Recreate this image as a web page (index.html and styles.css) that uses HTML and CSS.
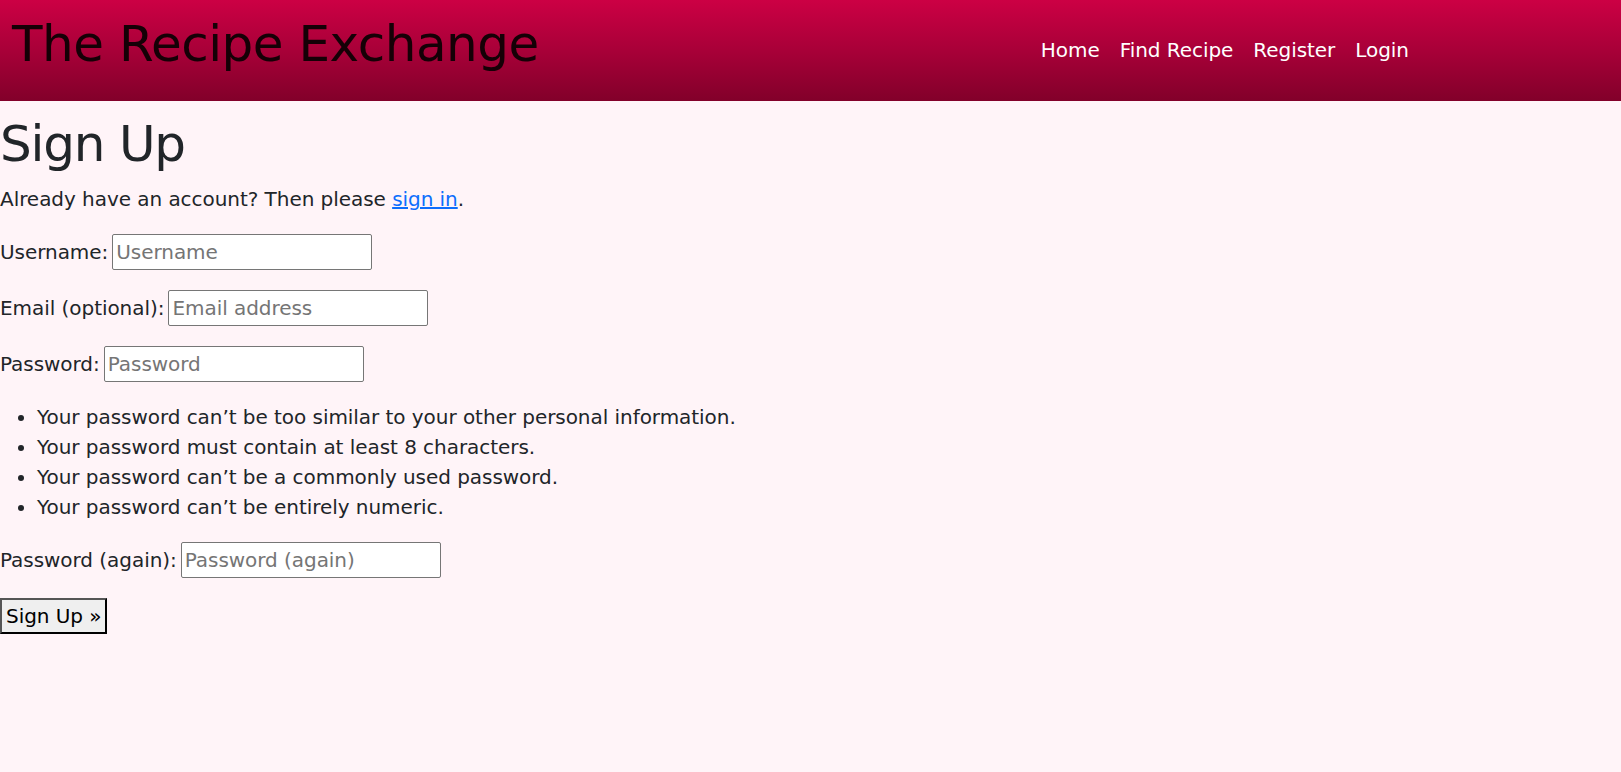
FILE: index.html
```html
<!DOCTYPE html>
<html lang="en">
<head>
<meta charset="utf-8">
<title>Sign Up - The Recipe Exchange</title>
<link rel="stylesheet" href="styles.css">
</head>
<body>
<header class="site-header">
  <div class="brand">The Recipe Exchange</div>
  <nav class="nav">
    <a class="nav-link" href="#">Home</a>
    <a class="nav-link" href="#">Find Recipe</a>
    <a class="nav-link" href="#">Register</a>
    <a class="nav-link" href="#">Login</a>
  </nav>
</header>
<main class="content">
  <h1 class="page-title">Sign Up</h1>
  <p class="lead-text">Already have an account? Then please <a class="link" href="#">sign in</a>.</p>
  <form class="signup-form">
    <p class="field"><label for="id_username">Username:</label> <input class="text-input" type="text" id="id_username" placeholder="Username"></p>
    <p class="field"><label for="id_email">Email (optional):</label> <input class="text-input" type="email" id="id_email" placeholder="Email address"></p>
    <p class="field"><label for="id_password1">Password:</label> <input class="text-input" type="password" id="id_password1" placeholder="Password"></p>
    <ul class="help-list">
      <li>Your password can’t be too similar to your other personal information.</li>
      <li>Your password must contain at least 8 characters.</li>
      <li>Your password can’t be a commonly used password.</li>
      <li>Your password can’t be entirely numeric.</li>
    </ul>
    <p class="field"><label for="id_password2">Password (again):</label> <input class="text-input" type="password" id="id_password2" placeholder="Password (again)"></p>
    <p class="actions"><button class="submit-btn" type="submit">Sign Up »</button></p>
  </form>
</main>
</body>
</html>
```
FILE: styles.css
```css
html, body {
  margin: 0;
  padding: 0;
}
body {
  background: #fff4f8;
  color: #212529;
  font-family: "DejaVu Sans", "Liberation Sans", sans-serif;
  font-size: 20px;
  line-height: 30px;
  letter-spacing: -0.05px;
  min-height: 772px;
}
.site-header {
  height: 101px;
  box-sizing: border-box;
  background: linear-gradient(to bottom, #cc0044 0%, #a80038 50%, #82002a 100%);
  display: flex;
  align-items: flex-start;
  justify-content: space-between;
  padding: 0 202px 0 12px;
}
.brand {
  font-size: 50px;
  line-height: 60px;
  margin-top: 14px;
  color: #150006;
  letter-spacing: -0.5px;
}
.nav {
  display: flex;
  margin-top: 35px;
}
.nav-link {
  color: #ffffff;
  text-decoration: none;
  padding: 0 10px;
  line-height: 30px;
}
.content {
  padding-top: 13px;
}
.page-title {
  font-size: 50px;
  line-height: 60px;
  font-weight: 400;
  margin: 0 0 10px;
  letter-spacing: -1.2px;
}
.lead-text {
  margin: 0 0 20px;
}
.link {
  color: #0d6efd;
  text-decoration: underline;
}
.field {
  margin: 0 0 20px;
  height: 36px;
  display: flex;
  align-items: center;
  gap: 4px;
}
.text-input {
  box-sizing: border-box;
  width: 260px;
  height: 36px;
  margin: 0;
  padding: 1px 3px;
  border: 1px solid #767676;
  border-radius: 2px;
  background: #ffffff;
  font-family: inherit;
  font-size: 20px;
  letter-spacing: -0.05px;
  color: #212529;
}
.text-input::placeholder {
  color: #757575;
}
.help-list {
  margin: 0 0 20px;
  padding-left: 37px;
}
.actions {
  margin: 0;
}
.submit-btn {
  box-sizing: border-box;
  height: 36px;
  margin: 0;
  padding: 0 4px;
  font-family: inherit;
  font-size: 20px;
  letter-spacing: -0.05px;
  color: #000000;
  background: #efefef;
  border: 2px solid #000000;
  border-top-color: #555555;
  border-left-color: #555555;
  border-radius: 0;
}
```
